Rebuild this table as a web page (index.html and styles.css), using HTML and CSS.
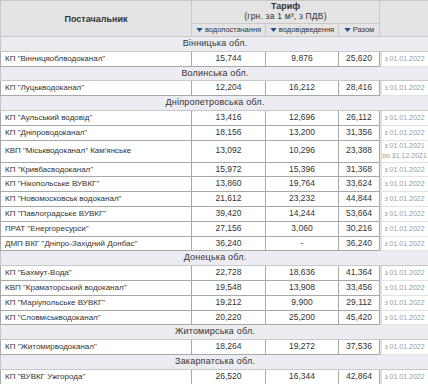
FILE: index.html
```html
<!DOCTYPE html>
<html lang="uk">
<head>
<meta charset="utf-8">
<title>Тарифи</title>
<link rel="stylesheet" href="styles.css">
</head>
<body>
<table class="tariffs">
  <colgroup>
    <col class="c-name"><col class="c-w1"><col class="c-w2"><col class="c-sum"><col class="c-date">
  </colgroup>
  <thead>
    <tr class="hr1">
      <th rowspan="2" class="h-name">Постачальник</th>
      <th colspan="3" class="h-tariff"><span class="h-title">Тариф</span><span class="h-unit">(грн. за 1 м³, з ПДВ)</span></th>
      <th rowspan="2" class="h-blank"></th>
    </tr>
    <tr class="hr2">
      <th class="h-col"><svg class="arrow" viewBox="0 0 8 5" width="7" height="4"><path d="M0 0H8L4 5Z"/></svg>водопостачання</th>
      <th class="h-col"><svg class="arrow" viewBox="0 0 8 5" width="7" height="4"><path d="M0 0H8L4 5Z"/></svg>водовідведення</th>
      <th class="h-col"><svg class="arrow" viewBox="0 0 8 5" width="7" height="4"><path d="M0 0H8L4 5Z"/></svg>Разом</th>
    </tr>
  </thead>
  <tbody>
    <tr class="region"><td colspan="5">Вінницька обл.</td></tr>
    <tr><td class="name">КП "Вінницяоблводоканал"</td><td class="num">15,744</td><td class="num">9,876</td><td class="num">25,620</td><td class="date">з 01.01.2022</td></tr>
    <tr class="region"><td colspan="5">Волинська обл.</td></tr>
    <tr><td class="name">КП "Луцькводоканал"</td><td class="num">12,204</td><td class="num">16,212</td><td class="num">28,416</td><td class="date">з 01.01.2022</td></tr>
    <tr class="region"><td colspan="5">Дніпропетровська обл.</td></tr>
    <tr><td class="name">КП "Аульський водовід"</td><td class="num">13,416</td><td class="num">12,696</td><td class="num">26,112</td><td class="date">з 01.01.2022</td></tr>
    <tr><td class="name">КП "Дніпроводоканал"</td><td class="num">18,156</td><td class="num">13,200</td><td class="num">31,356</td><td class="date">з 01.01.2022</td></tr>
    <tr class="double"><td class="name">КВП "Міськводоканал" Кам'янське</td><td class="num">13,092</td><td class="num">10,296</td><td class="num">23,388</td><td class="date">з 01.01.2021<br>по 31.12.2021</td></tr>
    <tr><td class="name">КП "Кривбасводоканал"</td><td class="num">15,972</td><td class="num">15,396</td><td class="num">31,368</td><td class="date">з 01.01.2022</td></tr>
    <tr><td class="name">КП "Нікопольське ВУВКГ"</td><td class="num">13,860</td><td class="num">19,764</td><td class="num">33,624</td><td class="date">з 01.01.2022</td></tr>
    <tr><td class="name">КП "Новомосковськ водоканал"</td><td class="num">21,612</td><td class="num">23,232</td><td class="num">44,844</td><td class="date">з 01.01.2022</td></tr>
    <tr><td class="name">КП "Павлоградське ВУВКГ"</td><td class="num">39,420</td><td class="num">14,244</td><td class="num">53,664</td><td class="date">з 01.01.2022</td></tr>
    <tr><td class="name">ПРАТ "Енергоресурси"</td><td class="num">27,156</td><td class="num">3,060</td><td class="num">30,216</td><td class="date">з 01.01.2022</td></tr>
    <tr><td class="name">ДМП ВКГ "Дніпро-Західний Донбас"</td><td class="num">36,240</td><td class="num">-</td><td class="num">36,240</td><td class="date">з 01.01.2022</td></tr>
    <tr class="region"><td colspan="5">Донецька обл.</td></tr>
    <tr><td class="name">КП "Бахмут-Вода"</td><td class="num">22,728</td><td class="num">18,636</td><td class="num">41,364</td><td class="date">з 01.01.2022</td></tr>
    <tr><td class="name">КВП "Краматорський водоканал"</td><td class="num">19,548</td><td class="num">13,908</td><td class="num">33,456</td><td class="date">з 01.01.2022</td></tr>
    <tr><td class="name">КП "Маріупольське ВУВКГ"</td><td class="num">19,212</td><td class="num">9,900</td><td class="num">29,112</td><td class="date">з 01.01.2022</td></tr>
    <tr><td class="name">КП "Словміськводоканал"</td><td class="num">20,220</td><td class="num">25,200</td><td class="num">45,420</td><td class="date">з 01.01.2022</td></tr>
    <tr class="region"><td colspan="5">Житомирська обл.</td></tr>
    <tr><td class="name">КП "Житомирводоканал"</td><td class="num">18,264</td><td class="num">19,272</td><td class="num">37,536</td><td class="date">з 01.01.2022</td></tr>
    <tr class="region"><td colspan="5">Закарпатська обл.</td></tr>
    <tr><td class="name">КП "ВУВКГ Ужгорода"</td><td class="num">26,520</td><td class="num">16,344</td><td class="num">42,864</td><td class="date">з 01.01.2022</td></tr>
  </tbody>
</table>
</body>
</html>
```

FILE: styles.css
```css
html, body {
  margin: 0;
  padding: 0;
  background: #ffffff;
}

body {
  font-family: "Liberation Sans", Arial, sans-serif;
  color: #333333;
}

.tariffs {
  border-collapse: collapse;
  table-layout: fixed;
  width: 429px;
  font-size: 8.5px;
}

.c-name { width: 191px; }
.c-w1 { width: 74px; }
.c-w2 { width: 73px; }
.c-sum { width: 41px; }
.c-date { width: 50px; }

.tariffs td,
.tariffs th {
  border: 1px solid #a8a8a8;
  padding: 0;
}

.tariffs thead th {
  background: #e4e4e4;
  border-color: #c8c8c8;
  color: #333333;
}

.hr1 th { height: 22px; }
.hr2 th { height: 12px; }

.h-name {
  font-weight: bold;
  font-size: 9px;
}

.h-tariff {
  vertical-align: top;
  padding-top: 1px;
}

.h-title {
  display: block;
  font-weight: bold;
  font-size: 9px;
  line-height: 10px;
}

.h-unit {
  display: block;
  font-weight: normal;
  font-size: 8.5px;
  line-height: 10px;
  letter-spacing: 0.2px;
}

.h-col {
  font-weight: normal;
  font-size: 7.5px;
  line-height: 12px;
  white-space: nowrap;
}

.arrow {
  fill: #1f4f96;
  margin-right: 2px;
  vertical-align: 0;
}

.tariffs tbody td {
  line-height: 13.8px;
  vertical-align: middle;
}

.region td {
  background: #ececf3;
  text-align: center;
  border-color: #c8c8cc;
  font-size: 9px;
  letter-spacing: 0.2px;
}

.name {
  padding-left: 4px !important;
  white-space: nowrap;
  text-align: left;
  font-size: 8px;
}

.num {
  text-align: center;
}

.tariffs .date {
  text-align: center;
  color: #9a9a9a;
  font-size: 7px;
  border-color: #e2e2e2;
  border-left: 1px solid #a8a8a8;
  box-shadow: inset 2px 0 0 #e2e2e2;
  white-space: nowrap;
}

.double td {
  height: 21px;
}

.double .date {
  line-height: 10px;
}
```
